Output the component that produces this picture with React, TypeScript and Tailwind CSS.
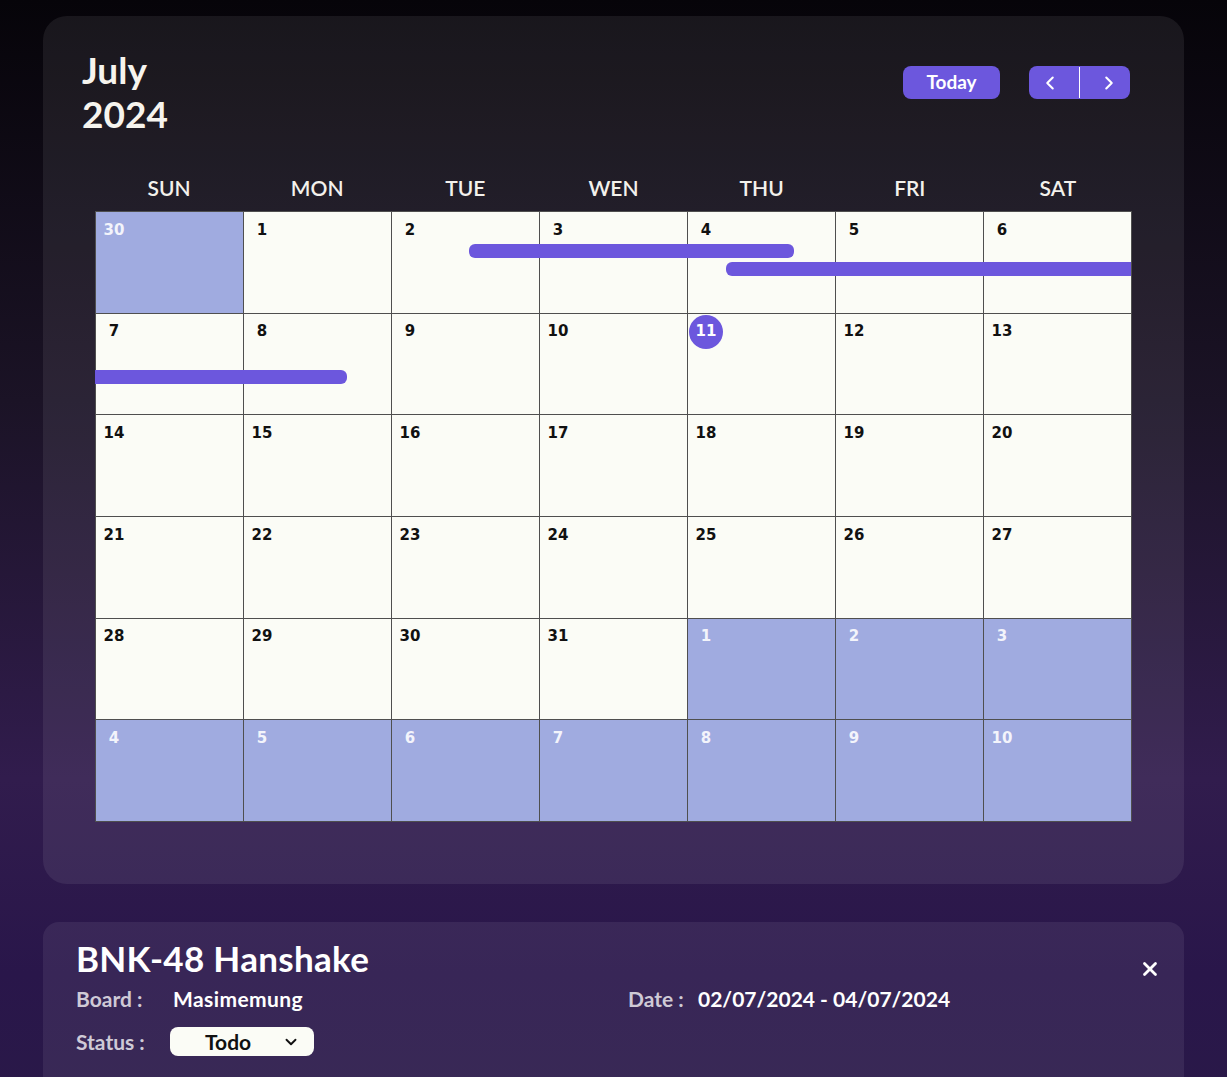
import { ChevronDown, ChevronLeft, ChevronRight, X } from "lucide-react";

const weekdays = ["SUN", "MON", "TUE", "WEN", "THU", "FRI", "SAT"];

type Day = { n: number; other?: boolean; today?: boolean };

const buildDays = (): Day[] => {
  const days: Day[] = [{ n: 30, other: true }];
  for (let i = 1; i <= 31; i++) days.push({ n: i, today: i === 11 });
  for (let i = 1; i <= 10; i++) days.push({ n: i, other: true });
  return days;
};

const days = buildDays();

function DayCell({ day }: { day: Day }) {
  return (
    <div className={day.other ? "bg-[#a0abe0]" : "bg-[#fbfcf6]"}>
      <div
        className={
          "ml-[1px] mt-[1px] flex h-[34px] w-[34px] items-center justify-center rounded-full text-[15px] font-bold " +
          (day.today
            ? "bg-[#6c57dd] text-white"
            : day.other
            ? "text-[#f3f4fb]"
            : "text-[#111111]")
        }
        style={{ fontFamily: '"DejaVu Sans", sans-serif' }}
      >
        {day.n}
      </div>
    </div>
  );
}

export default function App() {
  return (
    <div
      className="min-h-screen bg-[linear-gradient(180deg,#060409_0%,#1b1326_35%,#311c4d_68%,#29164a_85%,#2a1a48_100%)] px-[43px] pt-[16px]"
      style={{ fontFamily: "Lato, 'Open Sans', sans-serif" }}
    >
      {/* Calendar card */}
      <div className="rounded-[24px] bg-white/[0.075] pb-[62px]">
        <div className="flex items-start justify-between pl-[39px] pr-[54px] pt-[32px]">
          <h1 className="text-[37px] font-bold leading-[44px] text-[#f6f4ee]">
            July
            <br />
            2024
          </h1>
          <div className="mt-[18px] flex gap-[29px]">
            <button className="h-[33px] w-[97px] rounded-[8px] bg-[#6c57dd] text-[19px] font-bold text-white">
              Today
            </button>
            <div className="flex h-[33px] w-[101px] items-center rounded-[8px] bg-[#6c57dd] text-white">
              <button className="flex w-[42px] items-center justify-center">
                <ChevronLeft size={22} strokeWidth={2.25} />
              </button>
              <div className="flex flex-1 justify-center">
                <div className="h-[31px] w-px bg-white" />
              </div>
              <button className="flex w-[42px] items-center justify-center">
                <ChevronRight size={22} strokeWidth={2.25} />
              </button>
            </div>
          </div>
        </div>

        <div className="px-[52px]">
          <div className="mt-[34px] grid h-[41px] grid-cols-7 items-center pb-[6px]">
            {weekdays.map((d) => (
              <div key={d} className="text-center text-[21px] font-semibold text-[#f3f1ec]">
                {d}
              </div>
            ))}
          </div>

          <div className="relative">
            <div className="grid h-[611px] grid-cols-7 grid-rows-6 gap-px border border-[#4f4f4f] bg-[#4f4f4f]">
              {days.map((d, i) => (
                <DayCell key={i} day={d} />
              ))}
            </div>
            {/* event bars */}
            <div className="absolute left-[374px] top-[33px] h-[14px] w-[325px] rounded-[6px] bg-[#6c57dd]" />
            <div className="absolute left-[631px] top-[51px] h-[14px] w-[405px] rounded-l-[6px] bg-[#6c57dd]" />
            <div className="absolute left-0 top-[159px] h-[14px] w-[252px] rounded-r-[6px] bg-[#6c57dd]" />
          </div>
        </div>
      </div>

      {/* Event detail card */}
      <div className="mt-[38px] flex rounded-t-[16px] bg-white/[0.07] pb-[40px] pl-[33px] pr-[23px] pt-[16px]">
        <div className="flex-1">
          <h2 className="text-[35px] font-bold leading-[40px] tracking-[0.3px] text-white">BNK-48 Hanshake</h2>
          <div className="mt-[7px] flex text-[21px] font-bold leading-[28px]">
            <div className="flex w-[552px]">
              <span className="w-[97px] text-[#cfcad6]">Board :</span>
              <span className="tracking-[0.4px] text-white">Masimemung</span>
            </div>
            <div className="flex">
              <span className="w-[70px] text-[#cfcad6]">Date :</span>
              <span className="text-white">02/07/2024 - 04/07/2024</span>
            </div>
          </div>
          <div className="mt-[13px] flex items-center text-[21px] font-bold">
            <span className="w-[94px] text-[#cfcad6]">Status :</span>
            <button className="flex h-[29px] w-[144px] items-center rounded-[8px] bg-[#fbfcf6] pl-[35px] pr-[14px] text-[#111111]">
              <span className="flex-1 text-left">Todo</span>
              <ChevronDown size={18} strokeWidth={2.5} />
            </button>
          </div>
          <div className="mt-[16px] text-[21px] font-bold text-[#cfcad6]">Description :</div>
        </div>
        <button className="mt-[20px] h-[22px] text-white">
          <X size={22} strokeWidth={3} />
        </button>
      </div>
    </div>
  );
}
